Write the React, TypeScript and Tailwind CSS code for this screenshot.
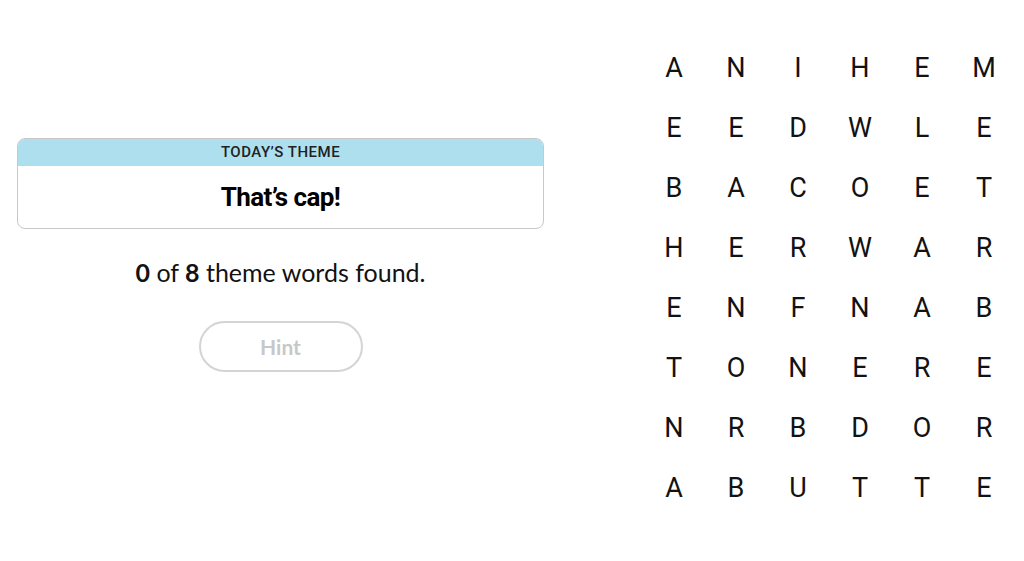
import React from "react";

const rows = ["ANIHEM", "EEDWLE", "BACOET", "HERWAR", "ENFNAB", "TONERE", "NRBDOR", "ABUTTE"];

export default function App() {
  return (
    <div className="w-[1024px] h-[561px] bg-white flex flex-row">
      <div className="w-[643px] pl-[17px] pr-[99px] pt-[138px] flex flex-col items-center">
        <div className="w-[527px] border border-[#c8c8c8] rounded-[8px] overflow-hidden">
          <div className="h-[27px] bg-[#aedfee] flex items-center justify-center text-[15px] font-medium text-[#222] tracking-[0.5px]" style={{ fontFamily: 'Roboto, "Liberation Sans", sans-serif' }}>
            TODAY’S THEME
          </div>
          <div className="h-[62px] flex items-center justify-center text-[26px] font-bold text-black tracking-[-0.6px]" style={{ fontFamily: 'Roboto, "Liberation Sans", sans-serif' }}>
            That’s cap!
          </div>
        </div>
        <div className="mt-[26px] text-[25px] text-[#121212] leading-[34px]" style={{ fontFamily: 'Lato, "Liberation Sans", sans-serif' }}>
          <span className="font-bold">0</span> of <span className="font-bold">8</span> theme words found.
        </div>
        <div className="mt-[32px] w-[164px] h-[51px] rounded-full border-2 border-[#d4d4d4] flex items-center justify-center text-[21px] font-bold text-[#c8c8c8]" style={{ fontFamily: 'Lato, "Liberation Sans", sans-serif' }}>
          Hint
        </div>
      </div>
      <div className="pt-[38px] grid grid-cols-6 w-[372px] h-fit" style={{ fontFamily: 'Roboto, "Liberation Sans", sans-serif' }}>
        {rows.flatMap((r, i) =>
          r.split("").map((c, j) => (
            <div key={`${i}-${j}`} className="h-[60px] flex items-center justify-center text-[27px] text-[#121212]">
              {c}
            </div>
          ))
        )}
      </div>
    </div>
  );
}
